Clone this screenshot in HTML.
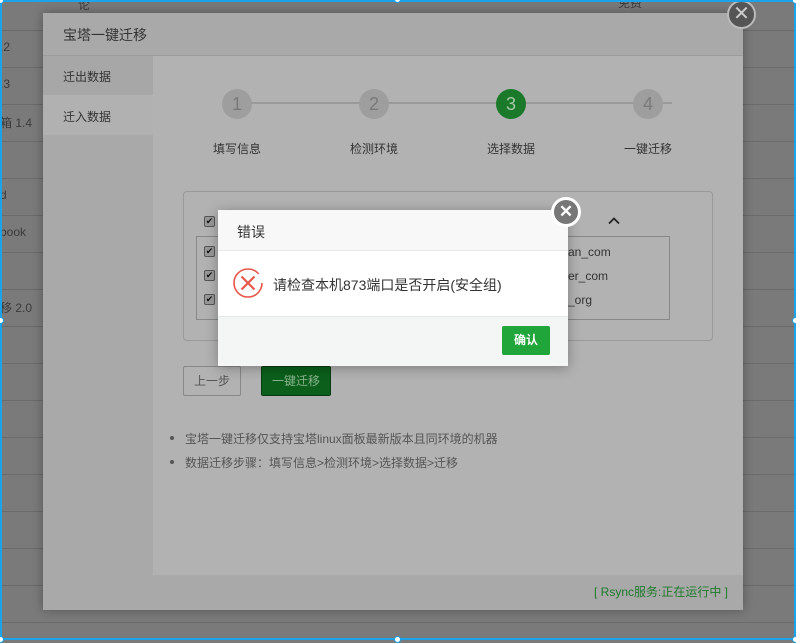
<!DOCTYPE html>
<html><head><meta charset="utf-8"><style>
*{margin:0;padding:0;box-sizing:border-box}
body{width:796px;height:640px;overflow:hidden;position:relative;background:#7a7a7a;font-family:"Liberation Sans","Noto Sans CJK SC",sans-serif;font-size:12px;color:#333}
.a{position:absolute}
.ln{position:absolute;left:0;width:796px;height:1px;background:#6a6a6a}
.bg{color:#3a3a3a;font-size:12px}
.cb{position:absolute;width:11px;height:11px;border:1px solid #555;border-radius:2px;background:#999;font-size:9px;line-height:9px;text-align:center;color:#111}
.step{position:absolute;width:30px;height:30px;border-radius:50%;background:#9e9e9e;color:#7a7a7a;font-size:18px;text-align:center;line-height:30px}
.lab{position:absolute;top:140px;font-size:12px;color:#333;width:80px;text-align:center}
.h{position:absolute;width:7px;height:7px;border-radius:50%;background:#fff;border:1px solid #1aa3e8}
.bul{position:absolute;width:4px;height:4px;border-radius:50%;background:#555}
</style></head><body>
<div class="ln" style="top:30px"></div><div class="ln" style="top:67px"></div><div class="ln" style="top:104px"></div><div class="ln" style="top:141px"></div><div class="ln" style="top:178px"></div><div class="ln" style="top:215px"></div><div class="ln" style="top:252px"></div><div class="ln" style="top:289px"></div><div class="ln" style="top:326px"></div><div class="ln" style="top:363px"></div><div class="ln" style="top:400px"></div><div class="ln" style="top:437px"></div><div class="ln" style="top:474px"></div><div class="ln" style="top:511px"></div><div class="ln" style="top:548px"></div><div class="ln" style="top:585px"></div><div class="ln" style="top:622px"></div>
<div class="a bg" style="left:78px;top:-4px">论</div>
<div class="a bg" style="left:618px;top:-6px">免费</div>
<div class="a bg" style="left:0;top:40px">.2</div>
<div class="a bg" style="left:0;top:77px">.3</div>
<div class="a bg" style="left:0;top:114px">箱 1.4</div>
<div class="a bg" style="left:0;top:188px">d</div>
<div class="a bg" style="left:0;top:225px">book</div>
<div class="a bg" style="left:0;top:299px">移 2.0</div>

<div class="a" style="left:43px;top:13px;width:700px;height:597px;background:#a9a9a9;box-shadow:0 0 10px rgba(0,0,0,.3)">
 <div class="a" style="left:20px;top:12px;font-size:14px;color:#333">宝塔一键迁移</div>
 <div class="a" style="left:0;top:42px;width:700px;height:1px;background:#9c9c9c"></div>
 <div class="a" style="left:0;top:43px;width:110px;height:39px;background:#a7a7a7"></div>
 <div class="a" style="left:20px;top:55px;font-size:12px">迁出数据</div>
 <div class="a" style="left:0;top:82px;width:110px;height:40px;background:#b1b1b1"></div>
 <div class="a" style="left:20px;top:95px;font-size:12px">迁入数据</div>
 <div class="a" style="left:110px;top:43px;width:590px;height:519px;background:#b2b2b2"></div>
 <div class="a" style="right:15px;top:570px;color:#1f7a2c;font-size:12px">[ Rsync服务:正在运行中 ]</div>
</div>

<div class="a" style="left:237px;top:102px;width:435px;height:2px;background:#999"></div>
<div class="step" style="left:222px;top:89px">1</div>
<div class="step" style="left:359px;top:89px">2</div>
<div class="step" style="left:496px;top:89px;background:#1a7a2a;color:#a5c8a8">3</div>
<div class="step" style="left:633px;top:89px">4</div>
<div class="lab" style="left:197px">填写信息</div>
<div class="lab" style="left:334px">检测环境</div>
<div class="lab" style="left:471px">选择数据</div>
<div class="lab" style="left:608px">一键迁移</div>

<div class="a" style="left:183px;top:191px;width:530px;height:150px;border:1px solid #999;border-radius:4px"></div>
<div class="a" style="left:196px;top:236px;width:474px;height:84px;border:1px solid #888"></div>
<div class="cb" style="left:204px;top:216px">✔</div>
<div class="cb" style="left:204px;top:246px">✔</div>
<div class="cb" style="left:204px;top:270px">✔</div>
<div class="cb" style="left:204px;top:294px">✔</div>
<svg class="a" style="left:607px;top:216px" width="14" height="9" viewBox="0 0 14 9"><path d="M2 7.5L7 2.5L12 7.5" fill="none" stroke="#222" stroke-width="1.8"/></svg>
<div class="a" style="left:568px;top:245px;color:#333">an_com</div>
<div class="a" style="left:568px;top:269px;color:#333">er_com</div>
<div class="a" style="left:568px;top:293px;color:#333">_org</div>

<div class="a" style="left:183px;top:366px;width:58px;height:30px;border:1px solid #888;border-radius:2px;text-align:center;line-height:28px;color:#555">上一步</div>
<div class="a" style="left:261px;top:366px;width:70px;height:30px;border:1px solid #063d10;background:#0b5f1b;border-radius:2px;text-align:center;line-height:28px;color:#8ab58f">一键迁移</div>

<div class="bul" style="left:170px;top:436px"></div>
<div class="bul" style="left:170px;top:460px"></div>
<div class="a" style="left:185px;top:430px;color:#555;font-size:12px">宝塔一键迁移仅支持宝塔linux面板最新版本且同环境的机器</div>
<div class="a" style="left:185px;top:454px;color:#555;font-size:12px">数据迁移步骤：填写信息&gt;检测环境&gt;选择数据&gt;迁移</div>

<div class="a" style="left:727px;top:0px;width:29px;height:29px;border-radius:50%;background:#555;border:2px solid #bbb;color:#ccc;text-align:center;line-height:24px;font-size:20px">✕</div>

<div class="a" style="left:218px;top:210px;width:350px;height:156px;background:#fff;box-shadow:0 2px 12px rgba(0,0,0,.3)">
 <div class="a" style="left:0;top:0;width:350px;height:41px;background:#f8f8f8;border-bottom:1px solid #e8e8e8"></div>
 <div class="a" style="left:19px;top:12px;font-size:14px;color:#333">错误</div>
 <svg class="a" style="left:14px;top:57px" width="32" height="32" viewBox="0 0 32 32"><circle cx="16" cy="16" r="14" fill="none" stroke="#e8564a" stroke-width="1.6" stroke-dasharray="78 10"/><path d="M9.5 9.5L22.5 22.5M22.5 9.5L9.5 22.5" stroke="#e8564a" stroke-width="2.2"/></svg>
 <div class="a" style="left:55px;top:65px;font-size:14px;color:#333">请检查本机873端口是否开启(安全组)</div>
 <div class="a" style="left:0;top:106px;width:350px;height:50px;background:#f4f5f5;border-top:1px solid #e8e8e8"></div>
 <div class="a" style="left:284px;top:116px;width:48px;height:29px;background:#20a53a;border-radius:2px;color:#fff;text-align:center;line-height:29px;font-weight:bold;font-size:12px">确认</div>
</div>
<div class="a" style="left:551px;top:197px;width:30px;height:30px;border-radius:50%;background:#777;border:3px solid #fff;color:#fff;text-align:center;line-height:23px;font-size:17px;font-weight:bold">✕</div>

<div class="a" style="left:0;top:0;width:796px;height:640px;border:2px solid #1aa3e8"></div>
<div class="h" style="left:-3px;top:-3px"></div><div class="h" style="left:394px;top:-4px"></div><div class="h" style="left:792px;top:-3px"></div>
<div class="h" style="left:-3px;top:317px"></div><div class="h" style="left:792px;top:317px"></div>
<div class="h" style="left:-3px;top:636px"></div><div class="h" style="left:394px;top:636px"></div><div class="h" style="left:792px;top:636px"></div>
</body></html>
